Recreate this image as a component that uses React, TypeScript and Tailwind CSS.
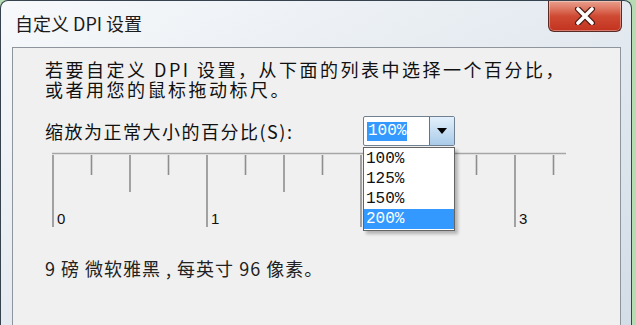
import React from 'react';

const cjk = { fontFamily: '"Noto Sans CJK SC", "Noto Sans", sans-serif' };
const mono = { fontFamily: '"Liberation Mono", "Noto Sans CJK SC", monospace' };

const options = ['100%', '125%', '150%', '200%'];

// the "2" label sits under the open dropdown list, so only 0, 1 and 3 show
const labels = [0, 1, 3];

const Ruler: React.FC = () => {
  const ticks = Array.from({ length: 14 }, (_, i) => i);
  return (
    <svg width="520" height="80" className="block">
      <line x1="0" y1="1.5" x2="514" y2="1.5" stroke="#a6a6a6" strokeWidth="1.5" />
      {ticks.map((i) => {
        const x = 1 + i * 38.5;
        const len = i % 4 === 0 ? 75 : i % 2 === 0 ? 40 : 23;
        return <line key={i} x1={x} y1="3" x2={x} y2={len} stroke="#8e8e8e" strokeWidth="1.6" />;
      })}
      {labels.map((n) => (
        <text
          key={n}
          x={5 + n * 154}
          y="72"
          fontSize="15"
          fill="#111"
          fontFamily="Liberation Sans, sans-serif"
        >
          {n}
        </text>
      ))}
    </svg>
  );
};

const CloseButton: React.FC = () => (
  <div className="w-[74px] h-[31px] rounded-b-[6px] border border-t-0 border-[#5a2a24] bg-gradient-to-b from-[#e8a08e] via-[#cf4a33] to-[#c2321e] flex items-center justify-center shadow-[inset_0_0_0_1px_rgba(255,255,255,0.35)]">
    <svg width="22" height="18" viewBox="0 0 22 18">
      <path d="M4 2 L18 16 M18 2 L4 16" stroke="#4a1a14" strokeWidth="6" strokeLinecap="round" fill="none" />
      <path d="M4 2 L18 16 M18 2 L4 16" stroke="#ffffff" strokeWidth="3.6" strokeLinecap="round" fill="none" />
    </svg>
  </div>
);

const App: React.FC = () => {
  return (
    <div className="w-[636px] h-[325px] overflow-hidden bg-[#b7dcb3] flex">
      <div className="w-[632px] h-[340px] rounded-t-[8px] border border-b-0 border-[#36434f] bg-gradient-to-br from-[#f7f9fb] via-[#e4eaf0] to-[#d3dde7] flex flex-col pl-[11px] pr-[10px]">
        <div className="h-[46px] flex items-start justify-between shrink-0">
          <div style={cjk} className="pl-[3px] pt-[9px] text-[18px] text-[#1b1b1b] leading-[26px]">
            自定义 DPI 设置
          </div>
          <div className="-mr-px">
            <CloseButton />
          </div>
        </div>

        <div className="flex-1 border border-b-0 border-[#8e959c] bg-[#f0f0f0] pl-[32px] pt-[11px]">
          <div style={cjk} className="text-[18px] leading-[20px] tracking-[2.5px] text-[#111]">
            <p>若要自定义 DPI 设置，从下面的列表中选择一个百分比，</p>
            <p>或者用您的鼠标拖动标尺。</p>
          </div>

          <div className="flex items-center mt-[17px] h-[30px]">
            <div style={cjk} className="w-[318px] text-[18px] tracking-[1.5px] text-[#111]">
              缩放为正常大小的百分比(S):
            </div>
            <div className="relative">
              <div className="w-[92px] h-[30px] flex border border-[#6f8191] rounded-[2px] bg-white">
                <div className="flex-1 flex items-center pl-[3px]">
                  <span style={mono} className="bg-[#3399ff] text-white text-[16px] leading-[19px] px-px">
                    100%
                  </span>
                </div>
                <div className="w-[25px] border-l border-[#3c7fb1] bg-gradient-to-b from-[#e3f0fb] to-[#a9cbe9] flex items-center justify-center">
                  <svg width="10" height="6" viewBox="0 0 10 6">
                    <path d="M0 0 L10 0 L5 6 Z" fill="#000" />
                  </svg>
                </div>
              </div>
              <div className="absolute left-0 top-[31px] w-[92px] border border-[#646464] bg-white shadow-[3px_3px_3px_rgba(0,0,0,0.25)] z-10 py-px">
                {options.map((o) => (
                  <div
                    key={o}
                    style={mono}
                    className={
                      o === '200%'
                        ? 'h-[20px] pl-[2px] text-[16px] leading-[20px] bg-[#3399ff] text-white'
                        : 'h-[20px] pl-[2px] text-[16px] leading-[20px] text-[#111]'
                    }
                  >
                    {o}
                  </div>
                ))}
              </div>
            </div>
          </div>

          <div className="mt-[6px] ml-[7px]">
            <Ruler />
          </div>

          <div style={cjk} className="mt-[25px] text-[18px] tracking-[1px] text-[#222] leading-[22px]">
            9 磅 微软雅黑 , 每英寸 96 像素。
          </div>
        </div>
      </div>
    </div>
  );
};

export default App;
